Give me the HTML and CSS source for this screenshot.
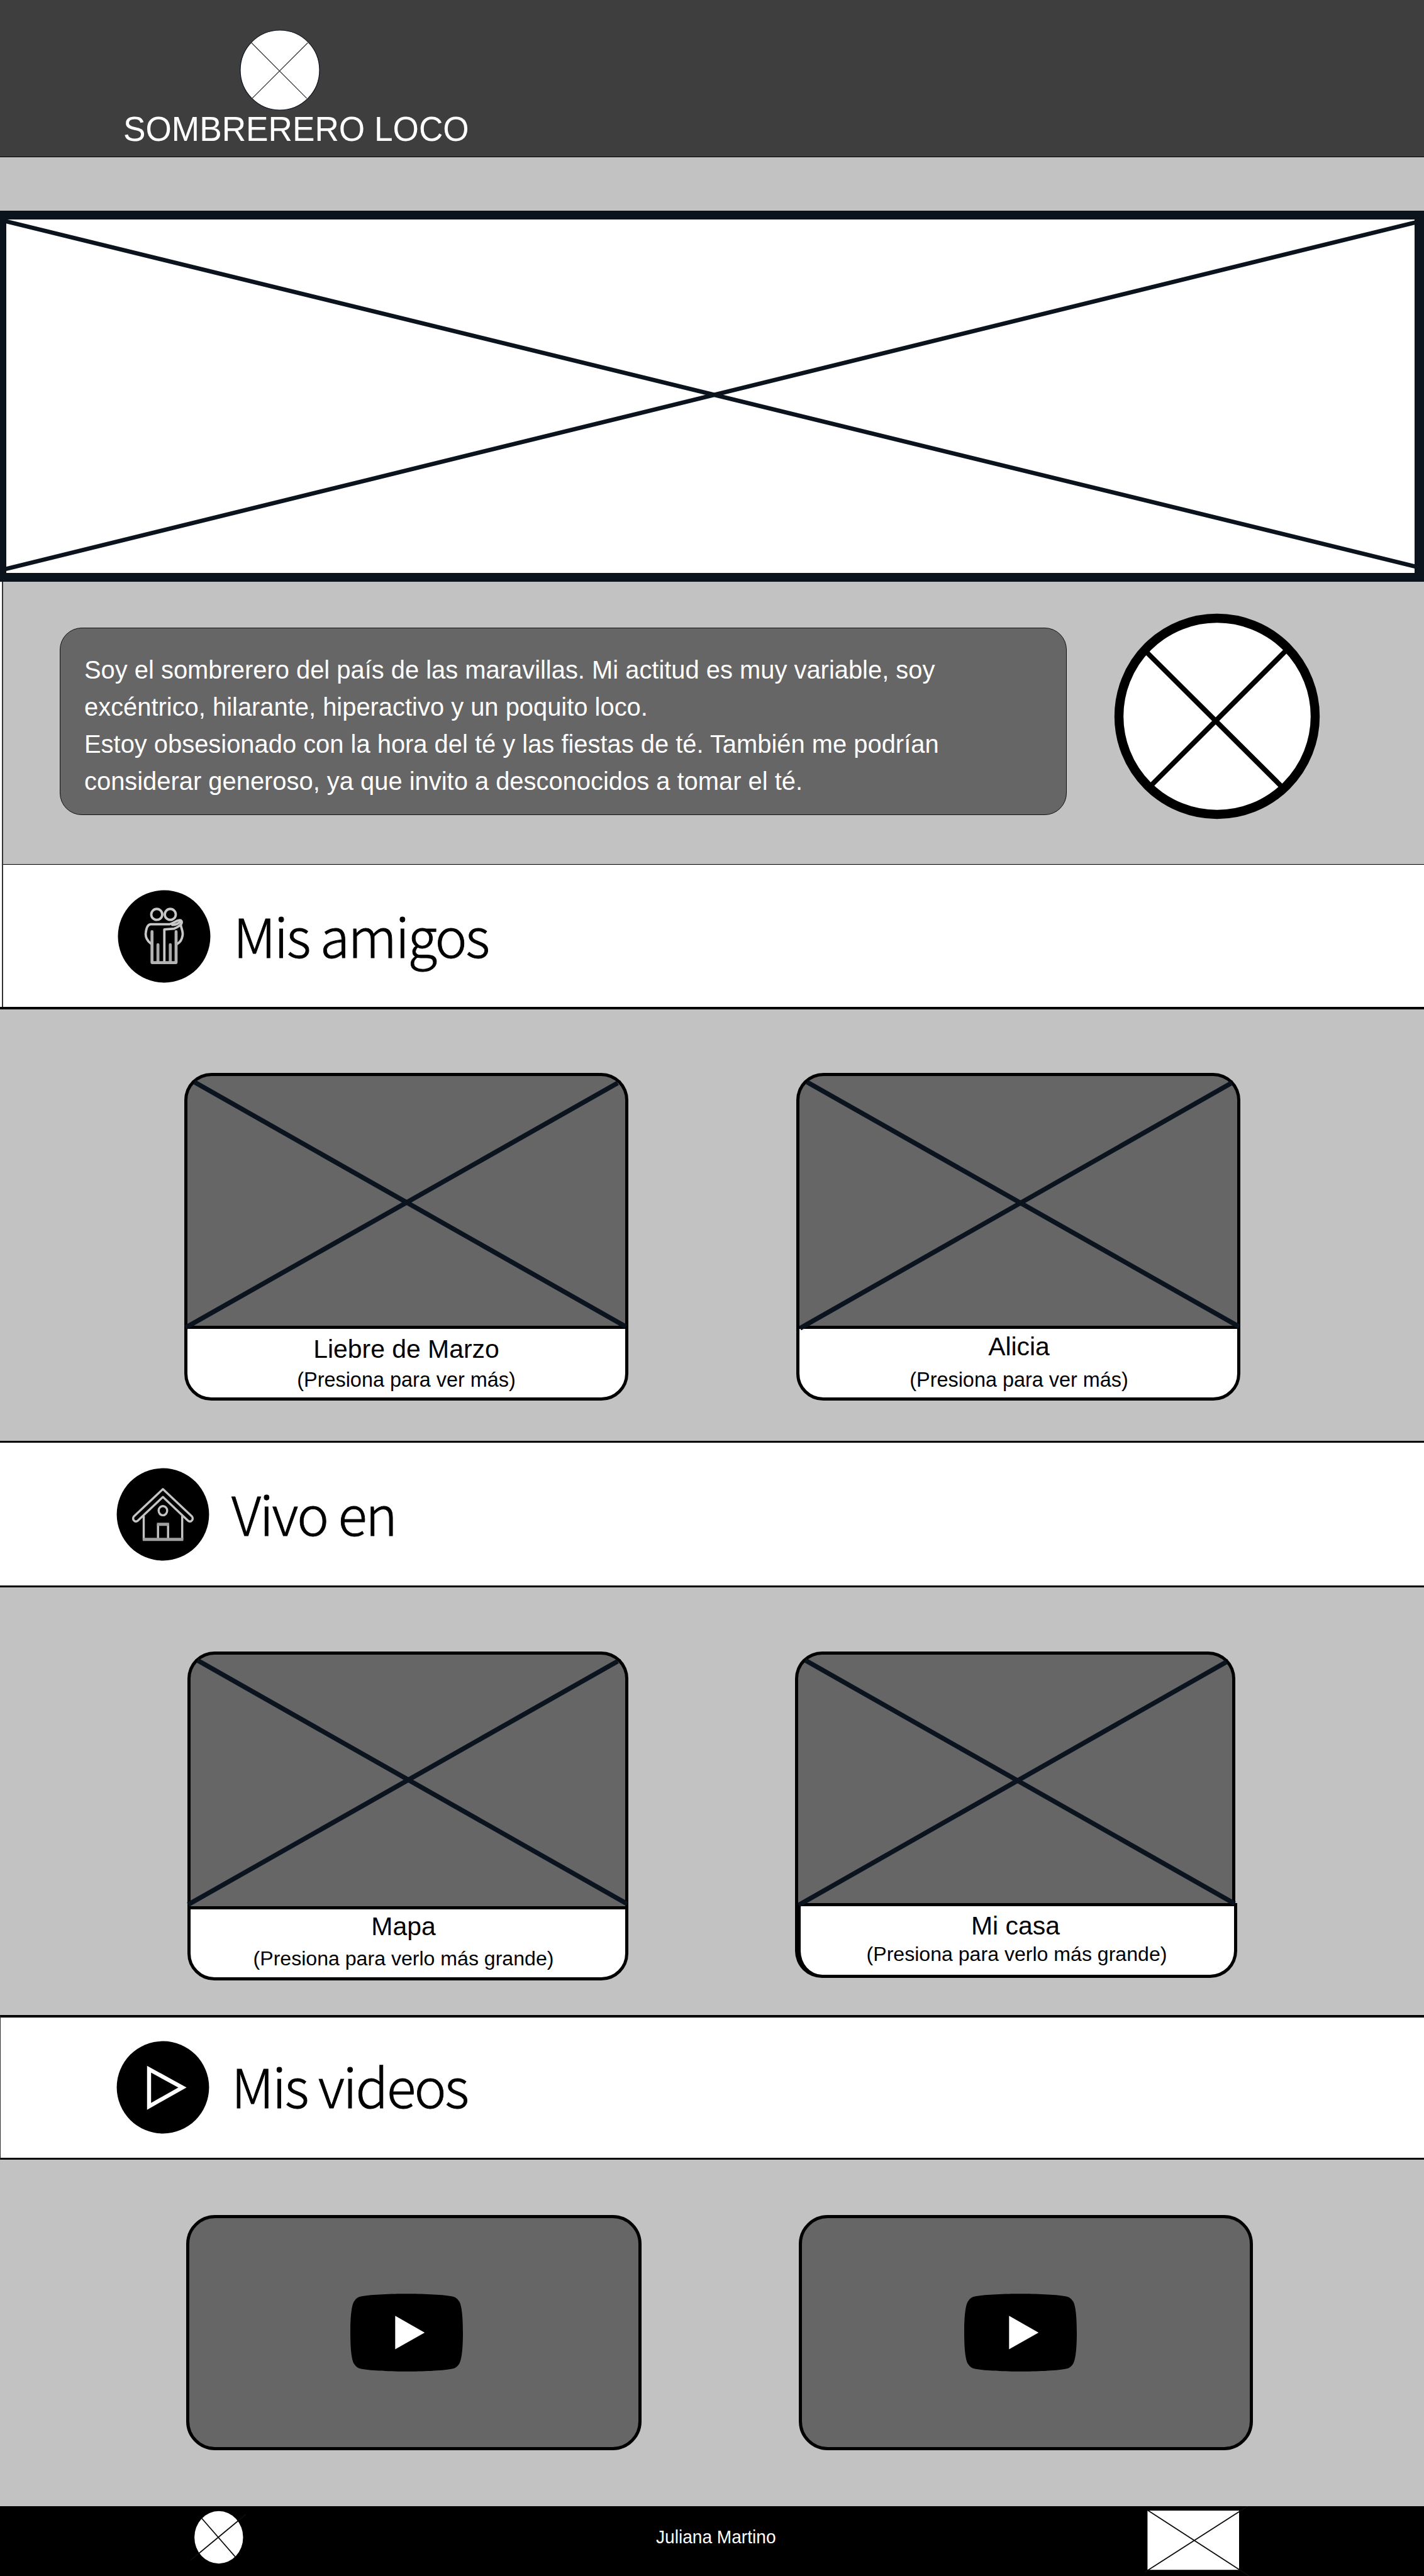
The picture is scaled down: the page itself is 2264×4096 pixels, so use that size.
FILE: index.html
```html
<!DOCTYPE html>
<html lang="es">
<head>
<meta charset="utf-8">
<title>Sombrerero Loco</title>
<link rel="stylesheet" href="styles.css">
</head>
<body>
<header class="header">
  <svg class="header-logo" width="128" height="129" viewBox="0 0 128 129">
    <ellipse cx="64" cy="64.5" rx="63" ry="63.5" fill="#fff" stroke="#0b131f" stroke-width="1.2"/>
    <path d="M18.8 21 106.7 109.4M108.3 21 19.9 109.4" stroke="#333" stroke-width="1.2"/>
  </svg>
  <h1 class="header-title">SOMBRERERO LOCO</h1>
</header>

<svg class="banner" width="2264" height="590" viewBox="0 0 2264 590">
  <rect width="2264" height="590" fill="#0b131d"/>
  <rect x="10" y="14" width="2239" height="562" fill="#fff"/>
  <path d="M8 16.5 2251 566M8 570 2251 18.5" stroke="#0b131d" stroke-width="6.8"/>
</svg>

<div class="intro">
  <div class="intro-inner">
    <section class="about">
      <div class="about-text">
        <p>Soy el sombrerero del país de las maravillas. Mi actitud es muy variable, soy<br>excéntrico, hilarante, hiperactivo y un poquito loco.</p>
        <p>Estoy obsesionado con la hora del té y las fiestas de té. También me podrían<br>considerar generoso, ya que invito a desconocidos a tomar el té.</p>
      </div>
      <svg class="about-photo" width="328" height="328" viewBox="1771 975 328 328">
        <circle cx="1935" cy="1139" r="156" fill="#fff" stroke="#000" stroke-width="14.4"/>
        <path d="M1823 1037 2038 1251M2045 1034 1829 1250" stroke="#000" stroke-width="8"/>
      </svg>
    </section>
    <section class="band band-friends">
      <svg class="band-icon" width="148" height="148" viewBox="-117.4 -101 626.4 626.4">
        <circle cx="195.7" cy="212" r="311"/>
        <g fill="none" stroke="#c9c9c9" stroke-width="16" stroke-linejoin="round" stroke-linecap="round">
          <circle cx="146" cy="64" r="37"/>
          <circle cx="237" cy="64" r="37"/>
          <path d="M106 260C84 244 68 216 72 188C76 152 86 132 104 130H232C256 126 272 106 300 103C312 103 318 112 312 126C304 140 286 150 262 160L197 165V390"/>
          <path d="M250 134C272 136 290 126 304 114M308 136C312 160 324 182 320 204C316 232 304 252 284 262"/>
          <path d="M154 268V384M237 268V384" stroke="#a9a9a9" stroke-width="20"/>
          <path d="M114 180V388H276V180" stroke="#b4b4b4" stroke-width="20"/>
        </g>
      </svg>
      <h2 class="band-title">Mis amigos</h2>
    </section>
  </div>
</div>

<main>
  <section class="cards cards-friends">
    <article class="card card-hare">
      <div class="card-media">
        <svg width="696" height="397"><path d="M11 9.5 697 398.5M684 11-3 400"/></svg>
      </div>
      <div class="card-caption">
        <h3>Liebre de Marzo</h3>
        <p>(Presiona para ver más)</p>
      </div>
    </article>
    <article class="card card-alice">
      <div class="card-media">
        <svg width="696" height="397"><path d="M12 9.5 699 398.5M687 11 1 401"/></svg>
      </div>
      <div class="card-caption">
        <h3>Alicia</h3>
        <p>(Presiona para ver más)</p>
      </div>
    </article>
  </section>

  <section class="band band-home">
    <svg class="band-icon" width="148" height="148" viewBox="184.8 2333.7 148 148">
      <circle cx="258.8" cy="2407.7" r="73.4"/>
      <g fill="none" stroke="#c4c4c4" stroke-width="3.4" stroke-linejoin="round">
        <path d="M258.8 2367.5 305 2411C308 2415 304 2421 299 2418L258.8 2380 218.6 2418C213.6 2421 209.6 2415 212.6 2411Z"/>
        <ellipse cx="258.8" cy="2401.8" rx="6.8" ry="7.3"/>
        <path d="M228.3 2410V2448M289.5 2410V2448M251 2447V2423M267 2447V2423"/>
        <path d="M226.7 2447.5H291.2M249.4 2423.4H268.6" stroke="#a0a0a0" stroke-width="5"/>
      </g>
    </svg>
    <h2 class="band-title">Vivo en</h2>
  </section>

  <section class="cards cards-home">
    <article class="card card-map">
      <div class="card-media">
        <svg width="691" height="400"><path d="M11 9 694 396.3M679 10.5-4 397.5"/></svg>
      </div>
      <div class="card-caption">
        <h3>Mapa</h3>
        <p>(Presiona para verlo más grande)</p>
      </div>
    </article>
    <article class="card card-house">
      <div class="card-media">
        <svg width="690" height="395"><path d="M11.5 9 694 396M681 11.5 1 398"/></svg>
      </div>
      <div class="card-caption">
        <h3>Mi casa</h3>
        <p>(Presiona para verlo más grande)</p>
      </div>
    </article>
  </section>

  <section class="band band-videos">
    <svg class="band-icon" width="148" height="148" viewBox="185 3245.3 148 148">
      <circle cx="259" cy="3319.3" r="73.4"/>
      <path d="M237 3290.5V3349.5L290 3319.5Z" fill="none" stroke="#fff" stroke-width="6.4"/>
    </svg>
    <h2 class="band-title">Mis videos</h2>
  </section>

  <section class="cards cards-videos">
    <div class="video video-one">
      <svg width="179" height="124" viewBox="0 0 179 123.4">
        <path d="M0 61.7C0 36 2 18 6 12C9 7.5 12 5 18 4C35 1 65 0 89.5 0S144 1 161 4C167 5 170 7.5 173 12C177 18 179 36 179 61.7S177 105.4 173 111.4C170 115.9 167 118.4 161 119.4C144 122.4 114 123.4 89.5 123.4S35 122.4 18 119.4C12 118.4 9 115.9 6 111.4C2 105.4 0 87.4 0 61.7Z"/>
        <path d="M71.3 35V88.3L118.2 61.7Z" fill="#fff"/>
      </svg>
    </div>
    <div class="video video-two">
      <svg width="179" height="124" viewBox="0 0 179 123.4">
        <path d="M0 61.7C0 36 2 18 6 12C9 7.5 12 5 18 4C35 1 65 0 89.5 0S144 1 161 4C167 5 170 7.5 173 12C177 18 179 36 179 61.7S177 105.4 173 111.4C170 115.9 167 118.4 161 119.4C144 122.4 114 123.4 89.5 123.4S35 122.4 18 119.4C12 118.4 9 115.9 6 111.4C2 105.4 0 87.4 0 61.7Z"/>
        <path d="M71.3 35V88.3L118.2 61.7Z" fill="#fff"/>
      </svg>
    </div>
  </section>
</main>

<footer class="footer">
  <svg class="footer-round" width="90" height="111" viewBox="303 3985 90 111">
    <ellipse cx="347.8" cy="4034.5" rx="38.7" ry="41.7" fill="#fff"/>
    <path d="M320.5 4004 374.5 4066M391 3998 303 4071" stroke="#0c0c0c" stroke-width="1.8"/>
  </svg>
  <p class="footer-name">Juliana Martino</p>
  <svg class="footer-mail" width="166" height="111" viewBox="1820 3985 166 111">
    <rect x="1824.4" y="3992" width="145.6" height="94.2" fill="#fff"/>
    <path d="M1824 3991 1986 4096M1984.5 3984.5 1820 4090" stroke="#0c0c0c" stroke-width="1.8"/>
  </svg>
</footer>
</body>
</html>
```
FILE: styles.css
```css
* {
  box-sizing: border-box;
  margin: 0;
  padding: 0;
}

body {
  width: 2264px;
  height: 4096px;
  overflow: hidden;
  background: #c2c2c2;
  color: #000;
  font-family: "Liberation Sans", Arial, sans-serif;
}

svg {
  display: block;
  flex: none;
}

h1, h2, h3 {
  font-weight: 400;
}

/* Header */
.header {
  height: 250px;
  padding: 47px 0 0 196px;
  background: #3e3e3e;
  border-bottom: 1px solid #000;
}

.header-logo {
  margin-left: 185px;
}

.header-title {
  color: #fff;
  font-size: 53.2px;
  line-height: 60px;
  white-space: nowrap;
  transform: scaleY(1.04);
  transform-origin: 0 48px;
}

.banner {
  margin-top: 85px;
}

/* Introduction */
.intro {
  padding-left: 3px;
  background: #fff;
  border-bottom: 4px solid #000;
}

.intro-inner {
  border-left: 2px solid #333;
}

.about {
  display: flex;
  align-items: flex-start;
  height: 450px;
  padding: 50px 0 0 90px;
  background: #c2c2c2;
  border-bottom: 1px solid #000;
}

.about-text {
  width: 1601px;
  height: 298px;
  margin: 23px 75px 0 0;
  padding: 37px 0 0 38px;
  background: #666;
  border: 1px solid #111;
  border-radius: 35px;
  color: #fff;
  font-size: 39.9px;
  line-height: 59px;
  white-space: nowrap;
}

/* Section bands */
.band {
  display: flex;
  align-items: flex-start;
  background: #fff;
}

.band-title {
  font-family: "Noto Sans CJK SC", "Noto Sans", sans-serif;
  font-size: 85.5px;
  font-weight: 300;
  line-height: 120px;
  letter-spacing: -2.2px;
  white-space: nowrap;
  -webkit-text-stroke: 0.9px #000;
}

.band-friends {
  height: 226px;
  padding: 40px 0 0 182px;
}

.band-friends .band-title {
  margin: 11px 0 0 36px;
}

.band-home {
  height: 233px;
  padding: 40px 0 0 185px;
  border-top: 3px solid #000;
  border-bottom: 3px solid #000;
}

.band-home .band-title {
  margin: 11px 0 0 35px;
}

.band-videos {
  height: 230px;
  padding: 37px 0 0 184px;
  border-top: 4px solid #000;
  border-bottom: 3px solid #000;
  border-left: 1px solid #333;
}

.band-videos .band-title {
  margin: 10px 0 0 35px;
}

/* Cards */
.cards {
  display: flex;
  align-items: flex-start;
}

.cards-friends {
  height: 686px;
  padding: 101px 0 0 293px;
  gap: 267px;
}

.cards-home {
  height: 680px;
  padding: 102px 0 0 298px;
  gap: 265px;
}

.cards-videos {
  height: 551px;
  padding: 88px 0 0 296px;
  gap: 250px;
}

.card {
  width: 706px;
}

.card-media {
  position: relative;
  z-index: 1;
  height: 402px;
  background: #666;
  border: 5px solid #000;
  border-bottom: 0;
  border-radius: 43px 43px 0 0;
}

.card-media svg {
  overflow: visible;
  fill: none;
  stroke: #0b131f;
  stroke-width: 7.5px;
}

.card-caption {
  height: 119px;
  padding-top: 9px;
  background: #fff;
  border: 5px solid #000;
  border-radius: 0 0 43px 43px;
  text-align: center;
  white-space: nowrap;
}

.card-caption h3 {
  font-size: 40.9px;
  line-height: 46px;
}

.card-caption p {
  margin-top: 7px;
  font-size: 32.4px;
  line-height: 38px;
}

.card-alice .card-caption {
  padding: 5px 0 0 2px;
}

.card-alice .card-caption p {
  margin-top: 11px;
}

.card-map {
  width: 701px;
}

.card-map .card-media {
  height: 405px;
}

.card-map .card-caption {
  height: 118px;
  padding: 4px 14px 0 0;
}

.card-map .card-caption p {
  margin-top: 9px;
  font-size: 32.1px;
}

.card-house {
  width: 703px;
}

.card-house .card-media {
  width: 700px;
  height: 400px;
}

.card-house .card-caption {
  padding: 8px 6px 0 0;
  border-left-width: 9px;
}

.card-house .card-caption p {
  margin-top: 3px;
  padding-left: 4px;
  font-size: 32.1px;
}

/* Videos */
.video {
  display: flex;
  align-items: center;
  width: 724px;
  height: 374px;
  background: #666;
  border: 5px solid #000;
  border-radius: 46px;
}

.video-one {
  padding-left: 256px;
}

.video-two {
  width: 722px;
  padding-left: 258px;
}

/* Footer */
.footer {
  display: flex;
  align-items: flex-start;
  height: 111px;
  padding-left: 303px;
  background: #000;
}

.footer-name {
  width: 777px;
  margin-top: 30px;
  padding-left: 650px;
  color: #fff;
  font-size: 28.1px;
  line-height: 40px;
  white-space: nowrap;
  transform: scaleY(1.08);
  transform-origin: 0 30px;
}

.footer-mail {
  margin-left: 650px;
}
```
